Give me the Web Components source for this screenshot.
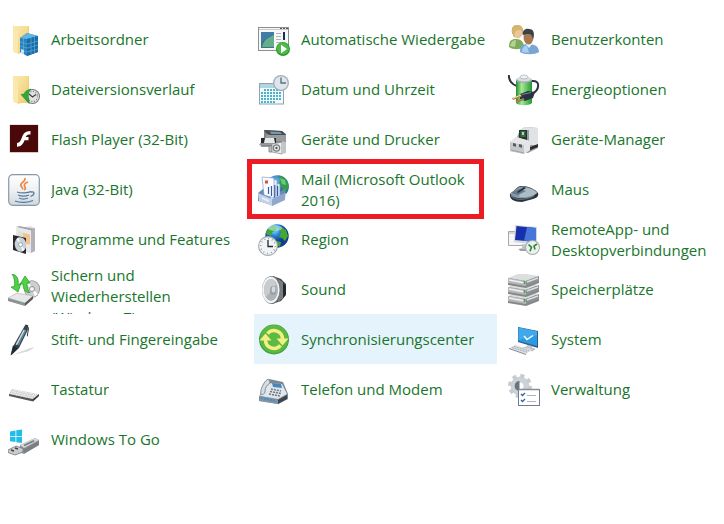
<!DOCTYPE html>
<html lang="de">
<head>
<meta charset="utf-8">
<title>Systemsteuerung</title>
<style>
  body { margin: 0; background: #fff; color: #18762b; font: 15px/21px "Open Sans", "Noto Sans", sans-serif; }
</style>
</head>
<body>
<control-panel>
  <panel-item icon="workfolders">Arbeitsordner</panel-item>
  <panel-item icon="autoplay">Automatische Wiedergabe</panel-item>
  <panel-item icon="users">Benutzerkonten</panel-item>
  <panel-item icon="history">Dateiversionsverlauf</panel-item>
  <panel-item icon="datetime">Datum und Uhrzeit</panel-item>
  <panel-item icon="power">Energieoptionen</panel-item>
  <panel-item icon="flash">Flash Player (32-Bit)</panel-item>
  <panel-item icon="printer">Geräte und Drucker</panel-item>
  <panel-item icon="devices">Geräte-Manager</panel-item>
  <panel-item icon="java">Java (32-Bit)</panel-item>
  <panel-item icon="mail" marked>Mail (Microsoft Outlook 2016)</panel-item>
  <panel-item icon="mouse">Maus</panel-item>
  <panel-item icon="programs">Programme und Features</panel-item>
  <panel-item icon="region">Region</panel-item>
  <panel-item icon="remote">RemoteApp- und Desktopverbindungen</panel-item>
  <panel-item icon="backup">Sichern und Wiederherstellen (Windows 7)</panel-item>
  <panel-item icon="sound">Sound</panel-item>
  <panel-item icon="storage">Speicherplätze</panel-item>
  <panel-item icon="pen">Stift- und Fingereingabe</panel-item>
  <panel-item icon="sync" active>Synchronisierungscenter</panel-item>
  <panel-item icon="system">System</panel-item>
  <panel-item icon="keyboard">Tastatur</panel-item>
  <panel-item icon="phone">Telefon und Modem</panel-item>
  <panel-item icon="admin">Verwaltung</panel-item>
  <panel-item icon="togo">Windows To Go</panel-item>
</control-panel>

<script>
const lines = (n, f) => Array.from({ length: n }, (_, i) => f(i)).join('');
const folder = '<path d="M5 2h16v27H8L5 27z" fill="#f2cf78"/><path d="M5 2l5 4v24l-5-3z" fill="#fbe8ad"/><path d="M10 6l-5-4h15v25l-10 3z" fill="url(#g)"/>';
const folderGrad = '<linearGradient id="g" x2="1" y2="1"><stop stop-color="#fdebb4"/><stop offset="1" stop-color="#f0cb70"/></linearGradient>';

const ICONS = {
  workfolders: `<defs>${folderGrad}</defs>${folder}
    <path d="M12 14l7-5 11 3v16l-11 4-7-4z" fill="#2a83bd"/><path d="M12 14l7-5 11 3-11 3z" fill="#61b5e0"/><path d="M19 15l11-3v16l-11 4z" fill="#1b6da8"/>
    <path d="M12 18l7 2 11-3M12 22l7 2 11-3M12 26l7 2 11-3M23 14v16M26.500 13v16M15.500 14v15" stroke="#65b6de" stroke-width=".6" fill="none"/><path d="M13 25l3 1v4l-3-1z" fill="#bde7fa"/>`,
  history: `<defs>${folderGrad}</defs>${folder}
    <circle cx="24.500" cy="22.500" r="7.500" fill="#77797b"/><circle cx="24.500" cy="22.500" r="6.500" fill="#e2e4e4"/><circle cx="24.500" cy="22.500" r="5" fill="none" stroke="#777" stroke-width="1.200" stroke-dasharray="1 1.600"/>
    <path d="M21 20l3.500 3L28 20.500" fill="none" stroke="#444" stroke-width="1.300"/><path d="M23 15c-4 .5-6 2.500-7 5l-3 .5 8 9v-4.500c-1.500-4-.5-7 2-10z" fill="#32a936" stroke="#188225" stroke-width=".5"/>`,
  flash: `<rect x="1.500" y=".5" width="29" height="28.500" rx="1" fill="#d9c8c8"/><rect x="2" y="1" width="28" height="27" fill="#4b0808"/>
    <path d="M22.500 7v3.500c-2.800 0-3.900.6-4.700 2.500h2.700v3.300h-4c-1.500 4.200-3.500 6.300-7.500 6.400V19c2.700-.3 3.700-2 4.900-5.600C15.400 9.200 17.500 7.100 22.500 7z" fill="#fff"/>`,
  java: `<defs><linearGradient id="g" y2="1" x2="0"><stop stop-color="#fff"/><stop offset=".5" stop-color="#eef1f4"/><stop offset="1" stop-color="#d0d8df"/></linearGradient></defs>
    <rect x=".7" y=".7" width="30.600" height="30.600" rx="4" fill="url(#g)" stroke="#8799a8" stroke-width="1.200"/>
    <path d="M17 4c1 4-6 5-4 8 1 1.500 2 2 1.600 3.500M20 8c-3 1-5 3-3 5 .8 1.300.3 2.200-.8 3" fill="none" stroke="#ec8439" stroke-width="1.600"/>
    <path d="M9 18c4 1.500 11 1 14-.3M10 21c3 1.300 8 1.300 11 0M11 24c2.500 1.200 6.500 1.200 9 0M7 27c5 2 14 1.600 18-.5M23 18c4-1 4 3-.5 4.300" fill="none" stroke="#557a9e" stroke-width="1.300"/>`,
  programs: `<path d="M10 4l13-2 4 2v23l-4 2-13-3z" fill="#e3e3e7"/><path d="M23 6l4-2v23l-4 2z" fill="#b2b2b9"/><path d="M8 3l3-1 16 3-4 1.500z" fill="#a6a1ab"/><path d="M8 3l15 3.500V29L8 25z" fill="#e8e7eb"/>
    <path d="M10 7l9 2v10l-9-2z" fill="#d8e5d4"/><path d="M15 9l7 1.500v10L15 19z" fill="#f1c289"/>
    <path d="M5 11l13 3v16L5 26z" fill="#27292d"/><ellipse cx="12.500" cy="20.500" rx="5.800" ry="7.300" fill="#c9d2d6" transform="rotate(-8 12.500 20.500)"/><path d="M12.500 20.500l-4-5.500 2-1.500zM12.500 20.500l4 5-2 2z" fill="#f7fbfc"/><circle cx="12.500" cy="20.500" r="2" fill="#fff" stroke="#8199a4" stroke-width=".8"/>`,
  backup: `<ellipse cx="24" cy="15" rx="8" ry="8.800" fill="#8b8e90"/><ellipse cx="24" cy="15" rx="7.200" ry="8" fill="#cdd0d1"/><path d="M24 15l-6-5 3-2.500zM24 15l6 5-3 2.500z" fill="#fff"/><circle cx="24" cy="15" r="2.500" fill="#f5f5f5" stroke="#777" stroke-width=".8"/>
    <path d="M0 24l9-5 16 3-8 7z" fill="#e8e8ea" stroke="#a4a4a8" stroke-width=".5"/><path d="M0 24l17 5v3L0 27z" fill="#8e8e94"/><path d="M17 29l8-7v3l-8 7z" fill="#57575c"/><path d="M12 28.500l3 1v1l-3-1z" fill="#4ed04d"/>
    <path d="M4 0c5 1 7 5 6 11l3-2-3 9-7-5 3.500-.5C7 8 6.500 3.500 4 0z" fill="#4ed342" stroke="#22942b" stroke-width=".7"/><path d="M17 2l5 7-3 .3c0 4 .5 7 3 9.500-5-.5-7-3.500-7-9l-3 .6z" fill="#4ed342" stroke="#22942b" stroke-width=".7"/>`,
  pen: `<path d="M4 31l18-7 5-.5-7 4z" fill="#dcdcdc"/><path d="M17.500.5l2.800.8-.6 5L11 24l-8 7.500 2-9z" fill="#37424b"/><path d="M15.500 5l3 1.500-7.500 15-3-1.500z" fill="#5c8096"/><path d="M15.500 6l1.300.6L9 21l-1.300-.6z" fill="#cbdde8"/><path d="M5 21.500l5 2.500-7.500 7.500z" fill="#222a31"/><path d="M20.500 3l.6.500-1.500 9-.8-.5z" fill="#14191d"/>`,
  keyboard: `<path d="M1 20l3-5 26 5-5 5z" fill="#cfcfd1"/><path d="M1 20l24 5v2.500L1 22z" fill="#555659"/><path d="M25 25l6-5v2l-6 5.500z" fill="#323438"/><path d="M4 17.500l23 5M5 16l23 4.600M3 19.300l22 4.700" stroke="#f6f6f6" stroke-width="1.100" stroke-dasharray="1.700 .8"/>`,
  togo: `<path d="M2 7.500l5.500-1V12H2zM8.300 6.300L14 5.500V12H8.300zM2 12.800h5.500V18L2 17.200zM8.300 12.800H14V19l-5.700-.8z" fill="#1fbde8"/>
    <path d="M12 21l15-7 4 2v5l-15 9-5-2z" fill="#909395"/><path d="M12 21l15-7 4 2-15 8z" fill="#d3d5d6"/><path d="M16 21.500l10-4.700" stroke="#777c80" stroke-width="1.500"/><path d="M16 25v4.500L31 21v-4z" fill="#7c7f83"/><path d="M0 26l8-4 7 2.500v3.500l-8 3-7-2.500z" fill="#c9cccf" stroke="#66696d" stroke-width=".7"/><path d="M3 26l3 1M7 24l3 1" stroke="#414448" stroke-width="1.500"/>`,
  autoplay: `<rect x=".5" y="3.500" width="30" height="23" fill="#f8f8f8" stroke="#8b8f94"/><path d="M1 5.500h29" stroke="#c9cccf"/><path d="M22 4.500h2m1 0h2m1 0h2" stroke="#555" stroke-width="1"/>
    <rect x="3" y="8" width="13" height="16" fill="#39777a"/><path d="M3 8h13v3c-7 1-9 6-13 7z" fill="#417ca8"/><path d="M4 23c2-8 6-9 12-12v12z" fill="#65ae8d"/><path d="M18 9.500h5m-5 3h5m-5 3h5m-5 3h5" stroke="#b1b6ba"/><path d="M26 8v8" stroke="#1b3151" stroke-width="2"/>
    <circle cx="25" cy="25" r="7" fill="#269b2b"/><circle cx="25" cy="24.500" r="6" fill="#50b947"/><path d="M23 20.800l6 4.200-6 4.200z" fill="#fff"/>`,
  datetime: `<rect x="1.500" y="9.500" width="24" height="20.500" fill="#f7fafb" stroke="#8ca4b0"/><path d="M2 10h23v4H2z" fill="#b5d4e2"/>
    ${lines(5, y => lines(7, x => (y === 0 && x < 1) || (y === 4 && x > 4) ? '' : `<rect x="${3 + x * 3}" y="${15 + y * 3}" width="2" height="2" fill="#47b4d1"/>`))}
    <circle cx="23" cy="9" r="8" fill="#a3afb7"/><circle cx="23" cy="9" r="6.700" fill="#dfe6eb"/><path d="M23 3.500V9h5" fill="none" stroke="#5f7382" stroke-width="1.400"/>`,
  printer: `<path d="M6 6l18 1 4 3v8l-3 2H2l4-7z" fill="#7f8488"/><path d="M6 6l18 1 4 4H12l-4-2z" fill="#474c51"/><path d="M12 7.500l10 .5 2 2H13z" fill="#7798a9"/><path d="M8 11h20v6H8z" fill="#989ca0"/><path d="M3 14h15v5H3z" fill="#25292d"/><path d="M7 14h9l1 5H6z" fill="#e7e9e9"/><path d="M1 20l14-1v2.500H2z" fill="#999da0"/><path d="M3 22h11" stroke="#3a3d40"/>
    <path d="M11 22h3v6h-3z" fill="#bfc2c3" stroke="#777b7d" stroke-width=".8"/><path d="M14 20l10-2v12l-10-2z" fill="#eceded" stroke="#8c9092" stroke-width=".8"/><path d="M24 17l4 1v11l-4 1z" fill="#c3c6c7"/><circle cx="18.500" cy="24" r="3.800" fill="#777c7f"/><circle cx="18.500" cy="24" r="2.500" fill="#edf0f0"/><circle cx="18.500" cy="24" r="1.200" fill="#53585b"/>`,
  mail: `<defs><radialGradient id="g" cx=".4" cy=".3"><stop stop-color="#72c6ec"/><stop offset="1" stop-color="#1b5da6"/></radialGradient></defs><circle cx="19.500" cy="12.500" r="11.300" fill="url(#g)"/><path d="M20 1.500c7 1 11.500 6 10.500 12.500l-5 9-3-3 2-6-4-4 2-4z" fill="#329c54"/><path d="M22 4l5 2 1 5-4-1z" fill="#6fcb67"/>
    <path d="M0 19l5-4 15 4 7-4v10l-13 6L0 27z" fill="#6f88b5"/>
    <path d="M13 8l9 2v14l-7 3z" fill="#d9e4f4" stroke="#7193c4" stroke-width=".6"/><path d="M9 5l10 1v19l-6 2z" fill="#e9f1fb" stroke="#7193c4" stroke-width=".6"/><path d="M4 3l12 1v20L6 21z" fill="#f9fcff" stroke="#7193c4" stroke-width=".6"/><path d="M7 6.500h3v3H7z" fill="#e54a37"/><path d="M19.500 12v10M16.800 11v13M13.500 12v10M10.500 13v7" stroke="#3759a2" stroke-width="1.200"/>
    <path d="M0 19l14 6 14-6-1 7-13 6-13-5z" fill="#c3d2e8"/><path d="M14 25l13-6v7l-13 6z" fill="#91a7ce"/><path d="M4 23l7 3v2l-7-3z" fill="#e8f0fa"/>`,
  region: `<defs><radialGradient id="g" cx=".4" cy=".25"><stop stop-color="#84e6ff"/><stop offset=".5" stop-color="#277fd2"/><stop offset="1" stop-color="#123c91"/></radialGradient></defs><circle cx="19" cy="12" r="11.700" fill="url(#g)"/><path d="M9 6l6-5 4 2-1 4-4 1-1 4-5-2zM23 3l5 3 2 6-3 5-3-3-3-1 2-5-2-3zM19 17l4 1-1 5-4-3z" fill="#46a831"/><ellipse cx="17" cy="4" rx="7" ry="3" fill="#d7fbff" opacity=".5"/>
    <circle cx="10" cy="22" r="10" fill="#a6acb1"/><circle cx="10" cy="22" r="8.800" fill="#f1f4f5"/><circle cx="10" cy="22" r="7.300" fill="none" stroke="#6c7377" stroke-width="1.200" stroke-dasharray=".8 3.020"/><path d="M10 16v6.500h5" fill="none" stroke="#222b36" stroke-width="1.300"/>`,
  sound: `<path d="M15 2l8 3 5 5v11l-5 6-9 3z" fill="#414447"/><path d="M20 5l5 3v16l-5 4z" fill="#7b7e80"/><path d="M25 9l3 3v8l-3 4z" fill="#25282a"/><ellipse cx="13.500" cy="16" rx="9.500" ry="14" fill="#77797b"/><ellipse cx="12.800" cy="16" rx="8.800" ry="13.200" fill="#f3f3f3"/><ellipse cx="13" cy="16" rx="7" ry="11" fill="#aeb3b5"/><path d="M6 16c0-6 3-11 7-11 2 0 4 2 5 5l-5 7-5 6c-1-2-2-4-2-7z" fill="#c9ccce"/><ellipse cx="15" cy="16.500" rx="3" ry="4.500" fill="#9aa1a4"/><ellipse cx="15.500" cy="15.500" rx="1.800" ry="3" fill="#d2dbe2"/>`,
  sync: `<circle cx="16" cy="15.500" r="15" fill="#3fa335"/><circle cx="16" cy="15" r="14" fill="#5bb944"/>
    <g fill="none" stroke="#f3f083" stroke-width="3.600"><path d="M9.500 9.600A8.500 8.500 0 0 1 24.500 15"/><path d="M22.500 21.400A8.500 8.500 0 0 1 7.500 16"/></g>
    <path d="M18.500 14.500h12l-6 7zM1.500 16.500h12l-6-7z" fill="#f3f083"/>`,
  phone: `<path d="M1 23l6-15 4-3 14 3 5 12v5l-10 5-19-3z" fill="#7b8791"/><path d="M2 22l7-13 15 1 5 10-9 5z" fill="#e2e6ea"/><path d="M2 22l18 4v4L2 27z" fill="#8395a5"/><path d="M20 26l9-5v4l-9 5z" fill="#3c4650"/><path d="M3 24l15 3" stroke="#4a8bc0" stroke-width="2" stroke-dasharray="2 1"/>
    <path d="M3 20C1.500 17 6 7 9.500 5.500c2.500 0 3 2 2 4l-2 1.500c-2 2-2.500 4.500-2.500 7-1 2.500-3 3.500-4 2z" fill="#d5dce2" stroke="#6d7984" stroke-width=".8"/><path d="M14 9l9 1 1 4-9-1z" fill="#4687bb"/><path d="M13 15l10 2M12 17.500l11 2M11 20l11 2" stroke="#6b7984" stroke-width="1.500" stroke-dasharray="2 1"/>`,
  users: `<path d="M1 23c0-6 2-8 7-8s8 3 8 8c-4 3-11 3-15 0z" fill="#7faa5a"/><path d="M2 22c1-4 3-6 6-6l-1 7z" fill="#b3d390"/><path d="M4 9c-1-5 1-8 5-8 5 0 7 4 6 9l-4 4-5-1z" fill="#c4a05a"/><ellipse cx="10" cy="8.500" rx="4.300" ry="6" fill="#e9c69b"/><path d="M4 8c0-5 2-7 6-7 3 0 5 3 5 6-5-2-8-1-9 5z" fill="#d6b66d"/>
    <path d="M12 28c0-6 2-8 8-8s11 2 11 8c-4 3-15 3-19 0z" fill="#78a7d6"/><path d="M14 28c0-4 2-6 5-7l2 8z" fill="#a8cef0"/><path d="M17 19l4 5 4-5z" fill="#e7f2fb"/><ellipse cx="20.500" cy="13" rx="5" ry="7.500" fill="#a97950"/><path d="M15 11c-1-5 3-7 6-6 5 0 6 5 4 10-1-4-2-5-5-5-2 0-3 0-5 1z" fill="#39424a"/>`,
  power: `<defs><linearGradient id="g"><stop stop-color="#268b30"/><stop offset=".35" stop-color="#a5eb93"/><stop offset="1" stop-color="#219735"/></linearGradient></defs><path d="M.8 1c0 5 2 9 8 11m15-5c9-1 8 9 0 13" fill="none" stroke="#2a3541" stroke-width="2"/><path d="M8 6h16v23c-3 3-13 3-16 0z" fill="url(#g)"/><ellipse cx="16" cy="6" rx="8" ry="3" fill="#a4acb3"/><ellipse cx="16" cy="5" rx="7" ry="2.500" fill="#d8dfe4"/><ellipse cx="16" cy="3" rx="4" ry="2" fill="#eef1f3" stroke="#87909a" stroke-width=".5"/>
    <path d="M12 20l8-3 7 1-2 6-8 3-5-2z" fill="#273440"/><path d="M14 20.500l9-2" stroke="#7d8997"/><path d="M4.500 25l9-3.500M8 28l8-3" stroke="#a58350" stroke-width="2.200"/><path d="M5 24.300l8-3.300" stroke="#f7e8b8"/>`,
  devices: `<path d="M12 6l5-3 13 1v20l-10 5-17-2z" fill="#999da1"/><path d="M17 3l13 1v17h-9V6h-9z" fill="#e1e2e4"/><path d="M11 6h8v12h-8z" fill="#29342f"/><path d="M12.500 7h5v6h-5z" fill="#376d4b"/><path d="M14 8h2v3h-2z" fill="#a6e1a2"/><path d="M20 24l10-4v3l-10 4z" fill="#292b2d"/>
    <path d="M2 18l6-5 14 4v9l-6 4L2 27z" fill="#d4d5d7"/><path d="M2 18l14 3v9L2 27z" fill="#c5c7c9"/><path d="M16 21l6-4v9l-6 4z" fill="#e4e5e6"/><path d="M8 13l14 4-6 4-14-3z" fill="#e5e6e8"/><path d="M5 19l3 .7v3l-3-.7zM11 20l3 .7v3l-3-.7z" fill="#555c62"/><path d="M3 26l13 3" stroke="#9fa2a5"/>`,
  mouse: `<path d="M2 20l8-7c4-3 17 1 20 6 1 3-1 5-5 6l-11 3C6 28 1 25 2 20z" fill="#29333e"/><path d="M3 19l8-6c5-2 16 2 18 6-5 5-13 6-20 5-4-1-7-2-6-5z" fill="#8798a6"/><path d="M12 18l5-4c5 0 10 2 12 5-5 4-12 5-18 4z" fill="#adbbc5"/><path d="M3 19l8-4 7 2-8 4z" fill="#647989"/><path d="M9 18l7-5 2 1-8 5z" fill="#222e3a"/><path d="M3 22c5 5 15 4 23 0" fill="none" stroke="#697887"/>`,
  remote: `<path d="M.5 7.500h18v14H.5z" fill="#f6f6f7" stroke="#a5a8ac"/><path d="M1 9h17" stroke="#b5b8bb"/><path d="M7 1l22 2v18L6 18z" fill="#d4d7dc"/><path d="M8.500 2L28 4v14L7 16z" fill="#1731aa"/><path d="M19 3l9 1v14l-12-1.200z" fill="#4676dc"/><path d="M14 20l8 1v3l4 3H13l-3-2 4-1z" fill="#bfc4ca"/><path d="M11 25h10l4 2H12z" fill="#9da2a8"/>
    <circle cx="24.500" cy="23.500" r="7.500" fill="#a3adab"/><circle cx="24.500" cy="23.500" r="6.500" fill="#edf0ec"/><path d="M20.500 20.500l3 2.800-1.500 4M29 20l-3 2 1 3.500" fill="none" stroke="#28863d" stroke-width="1.600"/>`,
  storage: lines(3, i => { const y = 22 - i * 9; return `<path d="M0 ${y + 1}l12-5 19 3v6l-13 5-18-3z" fill="#85888b"/><path d="M0 ${y}l12-5 19 3-13 5z" fill="#dcdddd"/><path d="M0 ${y}l18 3v5L0 ${y + 5}z" fill="#b5b7b9"/><path d="M1 ${y + 2}l16 3" stroke="#f0f0f0" stroke-width="1.500"/><path d="M18 ${y + 3}l13-5v5l-13 5z" fill="#8d9093"/><path d="M19 ${y + 4}l11-4" stroke="#dcdedf" stroke-width="1.400"/><path d="M16.500 ${y + 3}v3" stroke="#43a447" stroke-width="1.700"/>`; }),
  system: `<path d="M10 3l20 4v17l-20-6z" fill="#315b82"/><path d="M10.500 3.500L29 7.500v14.500L10.500 17z" fill="#299ae5"/><path d="M10.500 3.500L29 7.500v4L10.500 16z" fill="#41a8ec"/><path d="M16 12l3 3.500 6-4" fill="none" stroke="#fff" stroke-width="1.500"/><path d="M20 21l4 1-1 2 4 1-3 2-10-3 5-1z" fill="#c7ccd2" stroke="#737f8c" stroke-width=".4"/><path d="M1 24l6-3 17 5-6 4z" fill="#dce0e5"/><path d="M1 24l17 6v1L1 25z" fill="#7f8894"/><path d="M4 23.500l15 4.500M6 22.300l15 4.500" stroke="#a0a9b4" stroke-width=".9" stroke-dasharray="2 .8"/>`,
  admin: `<circle cx="12" cy="12" r="6.500" fill="none" stroke="#ccd2d7" stroke-width="6"/><circle cx="12" cy="12" r="10" fill="none" stroke="#c5cbd1" stroke-width="4" stroke-dasharray="4 3.854"/><path d="M11.500 7a5 5 0 0 0-2 9.500l2 .5z" fill="#6b757f"/>
    <rect x="10.500" y="15.500" width="21" height="16" fill="#fff" stroke="#747c85"/><path d="M11 15.500h20" stroke="#858d96" stroke-width="1.500"/><path d="M13 20l1.500 1.500L17 19M13 26l1.500 1.500L17 25" fill="none" stroke="#2c62ac" stroke-width="1.300"/><path d="M19 21.500h9M19 27.500h9" stroke="#b0b5bb"/>`
};

class ControlPanel extends HTMLElement {
  constructor() {
    super();
    this.attachShadow({ mode: 'open' }).innerHTML = `
      <style>
        :host { display: block; padding: 14px 0 0 4px; }
        nav { display: grid; grid-template-columns: 243fr 243fr 220fr; grid-auto-rows: 50px; column-gap: 7px; }
      </style>
      <nav aria-label="Alle Systemsteuerungselemente"><slot></slot></nav>`;
  }
}

class PanelIcon extends HTMLElement {
  constructor() {
    super();
    this.attachShadow({ mode: 'open' });
  }
  connectedCallback() {
    this.shadowRoot.innerHTML = `
      <style>
        :host { display: block; flex: none; width: 32px; height: 32px; }
        svg { display: block; width: 100%; height: 100%; }
      </style>
      <svg viewBox="0 0 32 32" aria-hidden="true">${ICONS[this.getAttribute('name')] || ''}</svg>`;
  }
}

class PanelItem extends HTMLElement {
  constructor() {
    super();
    this.attachShadow({ mode: 'open' });
  }
  connectedCallback() {
    this.shadowRoot.innerHTML = `
      <style>
        :host { display: block; position: relative; min-width: 0; }
        a { display: flex; align-items: center; gap: 11px; height: 100%; box-sizing: border-box; padding: 1px 8px 0 4px; color: inherit; text-decoration: none; }
        .label { max-height: 49px; overflow: hidden; }
        a:hover, :host([active]) a { background: #e5f3fd; }
        :host([marked])::after { content: ""; position: absolute; inset: -5px 13px -5px -7px; border: 5px solid #ed1c24; pointer-events: none; }
      </style>
      <a href="#"><panel-icon name="${this.getAttribute('icon')}"></panel-icon><span class="label"><slot></slot></span></a>`;
  }
}

customElements.define('panel-icon', PanelIcon);
customElements.define('panel-item', PanelItem);
customElements.define('control-panel', ControlPanel);
</script>
</body>
</html>
